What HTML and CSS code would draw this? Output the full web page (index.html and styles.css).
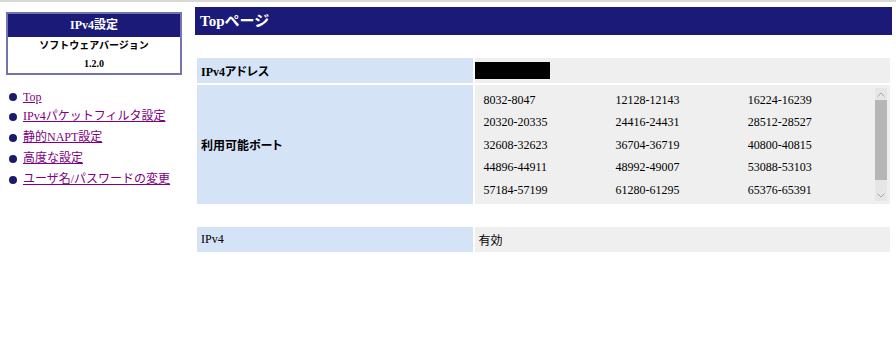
FILE: index.html
```html
<!DOCTYPE html>
<html lang="ja">
<head>
    <meta charset="UTF-8">
    <meta name="viewport" content="width=device-width, initial-scale=1.0">
    <title>IPv4設定</title>
    <link rel="stylesheet" href="styles.css">
</head>
<body>
    <div class="page">
        <div class="side">
            <div class="side-box">
                <div class="side-title">IPv4設定</div>
                <div class="side-version">ソフトウェアバージョン</div>
                <div class="side-number">1.2.0</div>
            </div>

            <ul class="menu">
                <li class="menu-short"><a href="#">Top</a></li>
                <li><a href="#">IPv4パケットフィルタ設定</a></li>
                <li><a href="#">静的NAPT設定</a></li>
                <li><a href="#">高度な設定</a></li>
                <li><a href="#">ユーザ名/パスワードの変更</a></li>
            </ul>
        </div>

        <div class="main">
            <div class="main-title">Topページ</div>

            <table class="info">
                <tr class="row-short">
                    <th>IPv4アドレス</th>
                    <td class="masked"><span class="mask"></span></td>
                </tr>
                <tr>
                    <th>利用可能ポート</th>
                    <td class="ports-cell">
                        <div class="ports-box">
                            <div class="ports">
                                <span>8032-8047</span>
                                <span>12128-12143</span>
                                <span>16224-16239</span>
                                <span>20320-20335</span>
                                <span>24416-24431</span>
                                <span>28512-28527</span>
                                <span>32608-32623</span>
                                <span>36704-36719</span>
                                <span>40800-40815</span>
                                <span>44896-44911</span>
                                <span>48992-49007</span>
                                <span>53088-53103</span>
                                <span>57184-57199</span>
                                <span>61280-61295</span>
                                <span>65376-65391</span>
                            </div>
                            <div class="scrollbar">
                                <div class="scroll-btn">
                                    <svg width="8" height="5" viewBox="0 0 8 5"><polyline points="0.5,4.5 4,1 7.5,4.5" fill="none" stroke="#a6a6a6" stroke-width="1"/></svg>
                                </div>
                                <div class="scroll-thumb"></div>
                                <div class="scroll-track"></div>
                                <div class="scroll-btn">
                                    <svg width="8" height="5" viewBox="0 0 8 5"><polyline points="0.5,0.5 4,4 7.5,0.5" fill="none" stroke="#a6a6a6" stroke-width="1"/></svg>
                                </div>
                            </div>
                        </div>
                    </td>
                </tr>
            </table>

            <table class="info info-second">
                <tr class="row-short">
                    <th class="plain">IPv4</th>
                    <td>有効</td>
                </tr>
            </table>
        </div>
    </div>
</body>
</html>
```

FILE: styles.css
```css
body {
    font-family: "Liberation Serif", "Noto Sans CJK JP", serif;
    font-size: 12px;
    margin: 0;
    border-top: 2px solid #d8d8d8;
    background-color: #ffffff;
    color: #000000;
}

.page {
    display: flex;
    align-items: flex-start;
}

/* left menu */
.side {
    width: 176px;
    margin: 10px 0 0 6px;
}

.side-box {
    border: 2px solid #7373ae;
    text-align: center;
}

.side-title {
    background-color: #1b1a78;
    color: #ffffff;
    font-weight: bold;
    font-size: 12px;
    height: 23px;
    line-height: 23px;
}

.side-version {
    font-weight: bold;
    font-size: 10px;
    line-height: 18px;
}

.side-number {
    font-weight: bold;
    font-size: 10px;
    line-height: 18px;
}

.menu {
    list-style: none;
    margin: 13px 0 0 -6px;
    padding: 0;
}

.menu li {
    display: flex;
    align-items: center;
    line-height: 21px;
    font-size: 12px;
}

.menu li.menu-short {
    line-height: 18px;
}

.menu li::before {
    content: "";
    width: 8px;
    height: 8px;
    border-radius: 50%;
    background-color: #1b1a6c;
    margin: 0 6px 0 9px;
}

.menu a {
    color: #800080;
}

/* main area */
.main {
    width: 697px;
    margin: 5px 0 0 13px;
}

.main-title {
    background-color: #1b1a78;
    color: #ffffff;
    font-weight: bold;
    font-size: 15px;
    height: 28px;
    line-height: 28px;
    padding-left: 5px;
}

.info {
    width: 100%;
    border-spacing: 2px;
    margin-top: 21px;
}

.info-second {
    margin-top: 19px;
}

.info th {
    width: 40%;
    background-color: #d5e3f6;
    text-align: left;
    font-weight: bold;
    font-feature-settings: "palt";
    padding: 0 4px;
}

.info th.plain {
    font-weight: normal;
}

.info td {
    background-color: #efefef;
    padding: 0 3px;
}

.info tr.row-short th,
.info tr.row-short td {
    height: 25px;
}

.info td.masked {
    padding: 0;
}

.mask {
    display: inline-block;
    vertical-align: middle;
    width: 75px;
    height: 17px;
    background-color: #000000;
}

.ports-cell {
    height: 119px;
}

.ports-box {
    display: flex;
    height: 113px;
}

.ports {
    flex: 1;
    display: grid;
    grid-template-columns: 1fr 1fr 1fr;
    grid-auto-rows: 22.55px;
    align-items: center;
    overflow: hidden;
    padding-top: 1px;
}

.ports span {
    padding-left: 5px;
}

.scrollbar {
    width: 12px;
    display: flex;
    flex-direction: column;
    background-color: #e6e6e6;
}

.scroll-btn {
    height: 12px;
    display: flex;
    align-items: center;
    justify-content: center;
}

.scroll-thumb {
    height: 80px;
    background-color: #b6b6b6;
}

.scroll-track {
    flex: 1;
}
```
